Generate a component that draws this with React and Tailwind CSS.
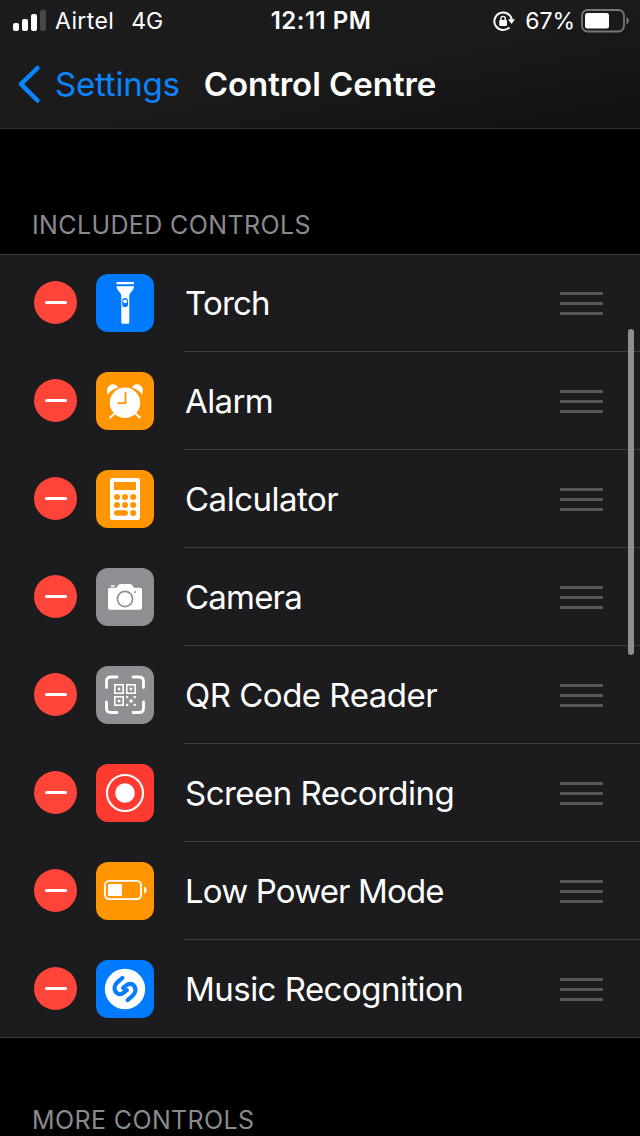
import { Fragment } from 'react';

function TorchIcon() {
    return (
        <svg viewBox="0 0 58 58" className="w-full h-full" fill="white">
            <rect x="20.5" y="8" width="17.5" height="2.3" rx="0.6" />
            <path d="M20.5 12.2h17.5c0 4.4-4.7 6-4.7 10v26.3q0 1.3-1.3 1.3h-5.4q-1.3 0-1.3-1.3V22.2c0-4-4.8-5.6-4.8-10z" />
            <rect x="26.2" y="24" width="5.8" height="9.2" rx="2.9" fill="#0a7aff" />
            <circle cx="29.1" cy="27.3" r="1.9" />
        </svg>
    );
}

function AlarmIcon() {
    return (
        <svg viewBox="0 0 58 58" className="w-full h-full" fill="white">
            <path d="M11.8 22.5c-2.2-5 .4-10.3 5.4-10.3 2.2 0 4.2 1.4 4.8 3.2-4.3 1.3-8 3.8-10.2 7.1zM46.2 22.5c2.2-5-.4-10.3-5.4-10.3-2.2 0-4.2 1.4-4.8 3.2 4.3 1.3 8 3.8 10.2 7.1z" />
            <path d="M18 42l-3.8 3.6M40 42l3.8 3.6" stroke="white" strokeWidth="2" strokeLinecap="round" />
            <circle cx="29" cy="30.8" r="15.2" />
            <path d="M29.5 20.3v10.8h-7.2" fill="none" stroke="#ff9500" strokeWidth="1.8" strokeLinecap="round" strokeLinejoin="round" />
        </svg>
    );
}

function CalculatorIcon() {
    return (
        <svg viewBox="0 0 58 58" className="w-full h-full" fill="#ff9500">
            <rect x="14" y="8" width="30" height="42" rx="2.5" fill="white" />
            <rect x="18" y="12" width="22" height="8" />
            {[27, 35].map((y) => (
                <Fragment key={y}>
                    <circle cx="21" cy={y} r="3" />
                    <circle cx="29" cy={y} r="3" />
                    <circle cx="37.2" cy={y} r="3" />
                </Fragment>
            ))}
            <rect x="18" y="40.2" width="14" height="5.6" rx="2.8" />
            <circle cx="37.2" cy="43" r="3" />
        </svg>
    );
}

function CameraIcon() {
    return (
        <svg viewBox="0 0 58 58" className="w-full h-full" fill="white">
            <rect x="14.8" y="17.2" width="4" height="1.5" rx="0.6" />
            <path d="M14 19.8h5.5c2.3 0 2.3-3.8 5-3.8h9.5c2.7 0 2.7 3.8 5 3.8h5q2 0 2 2v18q0 2-2 2H14q-2 0-2-2v-18q0-2 2-2z" />
            <circle cx="29" cy="31" r="7.6" fill="none" stroke="#8e8e93" strokeWidth="1.6" />
            <circle cx="39" cy="24" r="1" fill="#8e8e93" />
        </svg>
    );
}

function QrIcon() {
    return (
        <svg viewBox="0 0 58 58" className="w-full h-full" fill="none" stroke="white">
            <path
                d="M10.5 21.5v-6q0-4.5 4.5-4.5h6M37 11h6q4.5 0 4.5 4.5v6M47.5 36v6q0 4.5-4.5 4.5h-6M21 46.5h-6q-4.5 0-4.5-4.5v-6"
                strokeWidth="2.8"
                strokeLinecap="round"
            />
            <g strokeWidth="1.6">
                <rect x="18.8" y="18.8" width="8.4" height="8.4" />
                <rect x="30.8" y="18.8" width="8.4" height="8.4" />
                <rect x="18.8" y="30.8" width="8.4" height="8.4" />
            </g>
            <g fill="white" stroke="none">
                <rect x="21.7" y="21.7" width="2.6" height="2.6" />
                <rect x="33.7" y="21.7" width="2.6" height="2.6" />
                <rect x="21.7" y="33.7" width="2.6" height="2.6" />
                <rect x="30" y="30" width="2.2" height="2.2" />
                <rect x="37.6" y="30" width="2.2" height="2.2" />
                <rect x="33.5" y="33.5" width="3" height="3" />
                <rect x="30" y="37.8" width="2.2" height="2.2" />
                <rect x="37.6" y="37.8" width="2.2" height="2.2" />
            </g>
        </svg>
    );
}

function RecordIcon() {
    return (
        <svg viewBox="0 0 58 58" className="w-full h-full">
            <circle cx="29" cy="29" r="18" fill="none" stroke="white" strokeWidth="2.2" />
            <circle cx="29" cy="29" r="9.8" fill="white" />
        </svg>
    );
}

function LowPowerIcon() {
    return (
        <svg viewBox="0 0 58 58" className="w-full h-full" fill="white">
            <rect x="8.9" y="18.9" width="36.2" height="18.2" rx="4.5" fill="none" stroke="white" strokeWidth="1.9" />
            <rect x="12" y="22" width="14" height="12" rx="1.2" />
            <path d="M48 24.5c3.4 1 3.4 6 0 7z" />
        </svg>
    );
}

function MusicIcon() {
    return (
        <svg viewBox="0 0 58 58" className="w-full h-full" fill="none">
            <circle cx="29" cy="29" r="20.2" fill="white" />
            <g stroke="#0a7aff" strokeWidth="4.3" strokeLinecap="round" strokeLinejoin="round">
                <path d="M26.3 18L21.5 22.2C14.5 28.500 21.500 37.800 27.700 32.700L30.800 30.200" />
                <path d="M31.700 40L36.500 35.800C43.500 29.500 36.500 20.200 30.300 25.300L27.200 27.800" />
            </g>
        </svg>
    );
}

const controls = [
    { name: 'Torch', color: 'bg-[#007aff]', tracking: 'tracking-[-0.8px]', Icon: TorchIcon },
    { name: 'Alarm', color: 'bg-[#ff9500]', tracking: 'tracking-[-0.6px]', Icon: AlarmIcon },
    { name: 'Calculator', color: 'bg-[#ff9500]', tracking: 'tracking-[-0.5px]', Icon: CalculatorIcon },
    { name: 'Camera', color: 'bg-[#8e8e93]', tracking: 'tracking-[-0.8px]', Icon: CameraIcon },
    { name: 'QR Code Reader', color: 'bg-[#8e8e93]', tracking: 'tracking-[-0.5px]', Icon: QrIcon },
    { name: 'Screen Recording', color: 'bg-[#ff3b30]', tracking: 'tracking-[-0.53px]', Icon: RecordIcon },
    { name: 'Low Power Mode', color: 'bg-[#ff9500]', tracking: 'tracking-[-0.85px]', Icon: LowPowerIcon },
    { name: 'Music Recognition', color: 'bg-[#007aff]', tracking: 'tracking-[-0.53px]', Icon: MusicIcon },
];

function StatusBar() {
    return (
        <div className="grid grid-cols-[1fr_auto_1fr] items-center h-10 pl-[13px] pr-[11px] text-[23px] leading-10">
            <div className="flex items-center">
                <div className="flex items-end gap-[3px] h-[21px] mr-[9px]">
                    <span className="w-[6px] h-[8px] rounded-[2px] bg-white" />
                    <span className="w-[6px] h-[12px] rounded-[2px] bg-white" />
                    <span className="w-[6px] h-[17px] rounded-[2px] bg-white" />
                    <span className="w-[6px] h-[21px] rounded-[2px] bg-[#48484a]" />
                </div>
                <span className="pt-px tracking-[0.4px]">Airtel</span>
                <span className="pt-px ml-[17px]">4G</span>
            </div>
            <span className="pt-px text-[24px] font-semibold tracking-[0.5px]">12:11 PM</span>
            <div className="flex items-center justify-end">
                <svg viewBox="0 0 24 22" className="w-6 h-[22px] mr-[9px]" fill="none">
                    <path d="M19.8 9.500A8.800 8.800 0 1 0 17.400 17.500" stroke="white" strokeWidth="2" />
                    <path d="M16 9.300h7l-3.500 4.700z" fill="white" />
                    <rect x="7.200" y="10" width="7.800" height="6" rx="1" fill="white" />
                    <path d="M9 10.500V8.500a2.100 2.100 0 0 1 4.200 0v2" stroke="white" strokeWidth="1.4" />
                </svg>
                <span className="pt-px">67%</span>
                <svg viewBox="0 0 48 24" className="w-12 h-6 ml-[6px]">
                    <rect x="1" y="1" width="42" height="21.5" rx="5.5" fill="none" stroke="#78787a" strokeWidth="1.8" />
                    <rect x="4" y="4" width="24" height="15.5" rx="2.5" fill="white" />
                    <path d="M45.5 8c3 1.2 3 6.3 0 7.5z" fill="#78787a" />
                </svg>
            </div>
        </div>
    );
}

export default function App() {
    return (
        <div className="relative w-[640px] h-[1136px] overflow-hidden bg-black text-white font-['Inter',sans-serif]">
            <header className="h-[129px] border-b border-[#303032] bg-gradient-to-br from-[#1c1c1e] via-[#1b1b1b] to-[#111111]">
                <StatusBar />
                <div className="flex items-center h-[88px] pl-[17px]">
                    <svg viewBox="0 0 24 40" className="w-6 h-10" fill="none">
                        <path d="M20.5 4L4 20.2l16.5 16.3" stroke="#0a84ff" strokeWidth="4.5" strokeLinecap="round" strokeLinejoin="round" />
                    </svg>
                    <span className="ml-[14px] pt-0.5 text-[33px] tracking-[-0.2px] text-[#0a84ff]">Settings</span>
                    <h1 className="ml-6 pt-0.5 text-[33px] font-semibold tracking-[-0.05px]">Control Centre</h1>
                </div>
            </header>

            <h2 className="h-[125px] pt-[80px] pl-[32px] text-[25px] leading-8 tracking-[0.38px] text-[#8a8a8e]">INCLUDED CONTROLS</h2>

            <ul className="bg-[#1c1c1e] shadow-[inset_0_1px_0_#3d3d40,inset_0_-1px_0_#3d3d40]">
                {controls.map(({ name, color, tracking, Icon }) => (
                    <li key={name} className="group flex items-center h-[98px] pl-[34px]">
                        <button className="flex items-center justify-center w-[43px] h-[43px] mb-px rounded-full bg-[#ff453a]">
                            <span className="w-[22px] h-[3px] rounded-full bg-white" />
                        </button>
                        <div className={`ml-[19px] w-[58px] h-[58px] rounded-[12px] overflow-hidden ${color}`}>
                            <Icon />
                        </div>
                        <div className="ml-[30px] flex flex-1 items-center justify-between h-full pt-px pr-[37px] border-b border-[#3d3d40] group-last:border-transparent">
                            <span className={`pt-px pl-px text-[33px] ${tracking}`}>{name}</span>
                            <div className="flex flex-col gap-[7px] w-[43px]">
                                <span className="h-[3px] bg-[#57575a]" />
                                <span className="h-[3px] bg-[#57575a]" />
                                <span className="h-[3px] bg-[#57575a]" />
                            </div>
                        </div>
                    </li>
                ))}
            </ul>

            <h2 className="pt-[66px] pl-[32px] text-[25px] leading-8 tracking-[0.38px] text-[#8a8a8e]">MORE CONTROLS</h2>

            {/* Scroll indicator */}
            <div className="absolute right-[6px] top-[329px] w-[6px] h-[326px] rounded-full bg-[#8e8e90]" />
        </div>
    );
}
